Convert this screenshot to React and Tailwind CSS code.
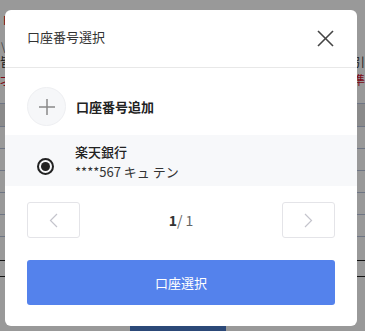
import React from "react";

const jp = { fontFamily: '"Noto Sans CJK JP", "Noto Sans", sans-serif' };

// ページ背景（モーダルの後ろ、端だけ見える）
const BackPage = () => (
    <div className="w-[365px] h-[331px] bg-white overflow-hidden" style={jp}>
        <div className="h-[14px]" />
        <div className="px-[3px] text-[12px] leading-[12px] text-[#d0102a]">F</div>
        <div className="h-[14px]" />
        <div className="flex justify-between px-[1px] text-[11px] leading-[12px] text-[#666]">
            <span>\</span>
            <span></span>
        </div>
        <div className="h-[4px]" />
        <div className="flex justify-between text-[12px] leading-[12px] text-[#333]">
            <span>皆</span>
            <span>9引</span>
        </div>
        <div className="h-[6px]" />
        <div className="flex justify-between text-[12px] leading-[12px] text-[#d0102a]">
            <span>才</span>
            <span>準</span>
        </div>
        <div className="h-[17px]" />
        <div className="h-[24px] bg-[#e6e6e6] border-y border-[#b8c4dc]" />
        <div className="h-[22px] border-b border-[#b8c4dc]" />
        <div className="h-[22px] border-b border-[#b8c4dc]" />
        <div className="h-[22px] border-b border-[#b8c4dc]" />
        <div className="h-[22px] border-b border-[#b8c4dc]" />
        <div className="h-[22px] border-b border-[#b8c4dc]" />
        <div className="h-[24px] border-b border-[#222]" />
        <div className="h-[16px] border-b border-[#222]" />
        <div className="h-[30px]" />
        <div className="ml-[130px] w-[96px] h-[40px] bg-[#4a7bc8]" />
    </div>
);

const CloseIcon = () => (
    <svg width="17" height="17" viewBox="0 0 17 17" fill="none" stroke="#444" strokeWidth="1.6">
        <line x1="1" y1="1" x2="16" y2="16" />
        <line x1="16" y1="1" x2="1" y2="16" />
    </svg>
);

const Chevron = ({ dir }) => (
    <svg width="9" height="15" viewBox="0 0 9 15" fill="none" stroke="#c4c4cc" strokeWidth="1.2">
        {dir === "left" ? <polyline points="8,1 1.5,7.5 8,14" /> : <polyline points="1,1 7.5,7.5 1,14" />}
    </svg>
);

export default function App() {
    return (
        <div className="relative w-[365px] h-[331px] overflow-hidden">
            <BackPage />
            <div className="absolute inset-0 bg-black/40" />

            {/* ===== モーダル ===== */}
            <div
                className="absolute left-[5px] top-[10px] w-[352px] h-[316px] bg-white rounded-[6px] flex flex-col"
                style={jp}
            >
                <div className="h-[58px] flex items-center justify-between pl-[22px] pr-[23px] border-b border-[#e8e8e8]">
                    <span className="text-[13px] text-[#333] -mt-[3px]">口座番号選択</span>
                    <CloseIcon />
                </div>

                <div className="pt-[19px] px-[22px] flex items-center gap-[10px]">
                    <div className="w-[39px] h-[39px] rounded-full bg-[#f6f7f9] border border-[#eeeff2] grid place-items-center">
                        <svg width="18" height="18" viewBox="0 0 18 18" stroke="#888" strokeWidth="1.5">
                            <line x1="9" y1="1" x2="9" y2="17" />
                            <line x1="1" y1="9" x2="17" y2="9" />
                        </svg>
                    </div>
                    <span className="text-[13px] font-bold text-[#222]">口座番号追加</span>
                </div>

                <div className="mt-[9px] h-[51px] bg-[#f7f8fa] flex items-center px-[32px] gap-[21px]">
                    <div className="w-[17px] h-[17px] rounded-full border-2 border-[#222] grid place-items-center mt-[12px]">
                        <div className="w-[9px] h-[9px] rounded-full bg-[#222]" />
                    </div>
                    <div className="flex flex-col mt-[3px]">
                        <span className="text-[13px] leading-[20px] font-medium text-[#222]">楽天銀行</span>
                        <span className="text-[13px] leading-[20px] text-[#333]">****567 キュ テン</span>
                    </div>
                </div>

                <div className="mt-[16px] px-[22px] flex items-center justify-between">
                    <button className="w-[53px] h-[36px] border border-[#e4e4e8] rounded-[3px] grid place-items-center">
                        <Chevron dir="left" />
                    </button>
                    <span className="text-[14px] text-[#666]">
                        <b className="text-[#333]">1</b>/ 1
                    </span>
                    <button className="w-[53px] h-[36px] border border-[#e4e4e8] rounded-[3px] grid place-items-center">
                        <Chevron dir="right" />
                    </button>
                </div>

                <div className="mt-[22px] px-[22px]">
                    <button className="w-full h-[45px] bg-[#5482ec] rounded-[3px] text-white text-[13px]">
                        口座選択
                    </button>
                </div>
            </div>
        </div>
    );
}
